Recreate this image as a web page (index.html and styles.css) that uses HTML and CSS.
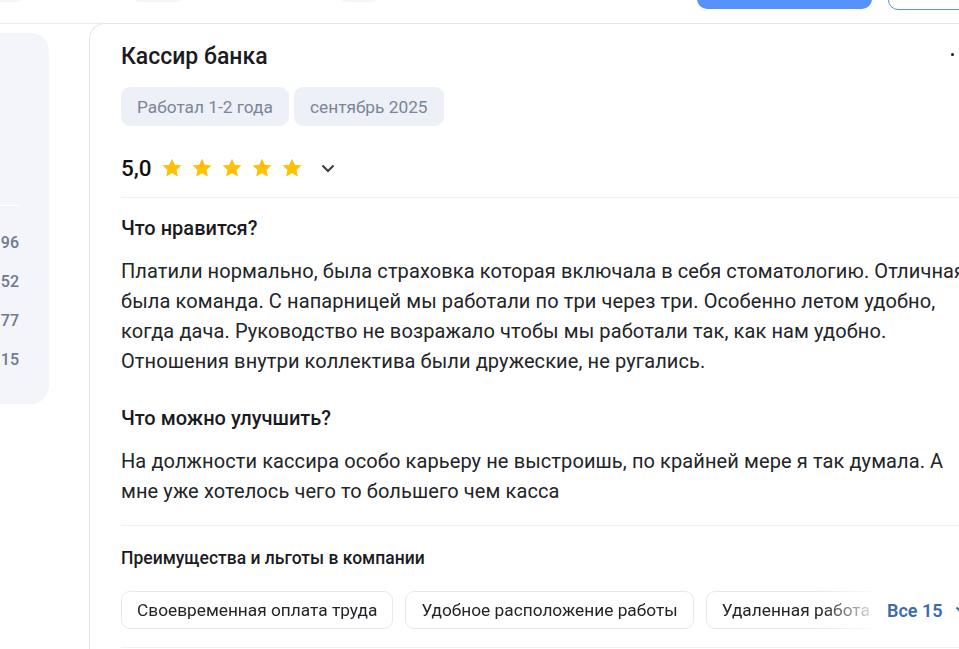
FILE: index.html
```html
<!DOCTYPE html>
<html lang="ru">
<head>
    <meta charset="UTF-8">
    <meta name="viewport" content="width=device-width, initial-scale=1.0">
    <title>Отзыв — Кассир банка</title>
    <link rel="stylesheet" href="styles.css">
</head>
<body>
    <!-- Top bar (scrolled, only bottoms visible) -->
    <header class="topbar">
        <span class="top-chip chip-a"></span>
        <span class="top-chip chip-b"></span>
        <span class="top-chip chip-c"></span>
        <span class="top-btn top-btn-primary"></span>
        <span class="top-btn top-btn-outline"></span>
    </header>

    <div class="page">
        <!-- Left stats panel -->
        <aside class="side-panel">
            <div class="side-line"></div>
            <ul class="side-stats">
                <li>96</li>
                <li>52</li>
                <li>77</li>
                <li>15</li>
            </ul>
        </aside>

        <!-- Review card -->
        <article class="review">
            <div class="review-head">
                <h2 class="review-title">Кассир банка</h2>
                <span class="more-dot"></span>
            </div>

            <div class="tags">
                <span class="tag">Работал 1-2 года</span>
                <span class="tag">сентябрь 2025</span>
            </div>

            <div class="rating">
                <span class="rating-value">5,0</span>
                <div class="stars">
                    <svg viewBox="0 0 24 24"><path d="M12 1.8l3.1 6.6 7.2.8-5.4 4.9 1.5 7.1L12 17.6l-6.4 3.6 1.5-7.1L1.7 9.2l7.2-.8z"/></svg>
                    <svg viewBox="0 0 24 24"><path d="M12 1.8l3.1 6.6 7.2.8-5.4 4.9 1.5 7.1L12 17.6l-6.4 3.6 1.5-7.1L1.7 9.2l7.2-.8z"/></svg>
                    <svg viewBox="0 0 24 24"><path d="M12 1.8l3.1 6.6 7.2.8-5.4 4.9 1.5 7.1L12 17.6l-6.4 3.6 1.5-7.1L1.7 9.2l7.2-.8z"/></svg>
                    <svg viewBox="0 0 24 24"><path d="M12 1.8l3.1 6.6 7.2.8-5.4 4.9 1.5 7.1L12 17.6l-6.4 3.6 1.5-7.1L1.7 9.2l7.2-.8z"/></svg>
                    <svg viewBox="0 0 24 24"><path d="M12 1.8l3.1 6.6 7.2.8-5.4 4.9 1.5 7.1L12 17.6l-6.4 3.6 1.5-7.1L1.7 9.2l7.2-.8z"/></svg>
                </div>
                <svg class="chevron" viewBox="0 0 14 9"><path d="M1.5 1.5L7 7l5.5-5.5"/></svg>
            </div>

            <section class="block">
                <h3 class="block-title">Что нравится?</h3>
                <p class="block-text">Платили нормально, была страховка которая включала в себя стоматологию. Отличная была команда. С напарницей мы работали по три через три. Особенно летом удобно, когда дача. Руководство не возражало чтобы мы работали так, как нам удобно. Отношения внутри коллектива были дружеские, не ругались.</p>
            </section>

            <section class="block block-second">
                <h3 class="block-title">Что можно улучшить?</h3>
                <p class="block-text">На должности кассира особо карьеру не выстроишь, по крайней мере я так думала. А мне уже хотелось чего то большего чем касса</p>
            </section>

            <section class="benefits">
                <h4 class="benefits-title">Преимущества и льготы в компании</h4>
                <div class="benefits-row">
                    <div class="benefit-list">
                        <span class="benefit">Своевременная оплата труда</span>
                        <span class="benefit">Удобное расположение работы</span>
                        <span class="benefit">Удаленная работа</span>
                    </div>
                    <a class="benefits-all" href="#">Все 15
                        <svg viewBox="0 0 12 8"><path d="M1.5 1.5L6 6l4.5-4.5"/></svg>
                    </a>
                </div>
            </section>
        </article>
    </div>
</body>
</html>
```

FILE: styles.css
```css
/* Global Styles */
body {
    margin: 0;
    font-family: Roboto, "Liberation Sans", Arial, sans-serif;
    background-color: #ffffff;
    color: #1f2329;
    width: 959px;
    height: 649px;
    overflow: hidden;
}

/* Top bar */
.topbar {
    height: 23px;
    border-bottom: 1px solid #ebecef;
    display: flex;
    align-items: flex-start;
    overflow: hidden;
}

.top-chip {
    display: block;
    flex-shrink: 0;
    height: 12px;
    margin-top: -10px;
    background-color: #f4f5fa;
    border-radius: 8px;
}

.chip-a {
    width: 40px;
    margin-left: -18px;
}

.chip-b {
    width: 50px;
    margin-left: 111px;
}

.chip-c {
    width: 38px;
    margin-left: 157px;
}

.top-btn {
    display: block;
    flex-shrink: 0;
    height: 30px;
    margin-top: -21px;
    border-radius: 10px;
    box-sizing: border-box;
}

.top-btn-primary {
    width: 175px;
    margin-left: 319px;
    background-color: #5592fc;
}

.top-btn-outline {
    width: 120px;
    margin-top: -20px;
    margin-left: 16px;
    border: 1px solid #5b8ff0;
    background-color: #ffffff;
}

/* Page layout */
.page {
    display: flex;
    align-items: flex-start;
}

/* Left panel */
.side-panel {
    width: 250px;
    margin-left: -201px;
    margin-top: 9px;
    height: 371px;
    flex-shrink: 0;
    box-sizing: border-box;
    padding: 172px 30px 0 0;
    background-color: #f4f5fa;
    border-radius: 18px;
}

.side-line {
    height: 1px;
    background-color: #ffffff;
}

.side-stats {
    list-style: none;
    margin: 26px 0 0;
    padding: 0;
    text-align: right;
}

.side-stats li {
    height: 39px;
    font-size: 16px;
    font-weight: 500;
    color: #6d7a8e;
    line-height: 22px;
}

/* Review card */
.review {
    flex: 1;
    margin-left: 40px;
    margin-top: -1px;
    height: 700px;
    border: 1px solid #e4e6ec;
    border-right: none;
    border-radius: 16px 0 0 0;
    padding: 18px 0 0 31px;
    box-sizing: border-box;
    min-width: 0;
}

.review-head {
    display: flex;
    justify-content: space-between;
    align-items: flex-start;
}

.review-title {
    margin: 0;
    font-size: 23px;
    font-weight: 500;
    line-height: 30px;
    color: #1b1b1f;
}

.more-dot {
    width: 3px;
    height: 3px;
    margin-top: 11px;
    margin-right: 5px;
    border-radius: 50%;
    background-color: #1b1b1f;
}

.tags {
    display: flex;
    gap: 5px;
    margin-top: 15px;
}

.tag {
    height: 39px;
    padding: 0 16px;
    display: flex;
    align-items: center;
    background-color: #edf0f7;
    border-radius: 9px;
    font-size: 17.3px;
    color: #7b8597;
}

.rating {
    display: flex;
    align-items: center;
    height: 40px;
    margin-top: 22px;
    padding-bottom: 9px;
    border-bottom: 1px solid #eef0f3;
}

.rating-value {
    font-size: 22.5px;
    font-weight: 500;
    color: #111111;
    margin-right: 9px;
}

.stars {
    display: flex;
    gap: 8px;
}

.stars svg {
    width: 22px;
    height: 22px;
    fill: #ffc107;
}

.chevron {
    width: 14px;
    height: 9px;
    margin-left: 18px;
    fill: none;
    stroke: #3a3d44;
    stroke-width: 2;
}

/* Review text blocks */
.block {
    margin-top: 18px;
}

.block-second {
    margin-top: 30px;
}

.block-title {
    margin: 0;
    font-size: 20px;
    font-weight: 500;
    line-height: 24px;
    color: #1b1b1f;
}

.block-text {
    margin: 16px 0 0;
    font-size: 20px;
    letter-spacing: 0.1px;
    line-height: 30px;
    color: #222428;
    width: 862px;
}

/* Benefits */
.benefits {
    margin-top: 19px;
    border-top: 1px solid #eef0f3;
    border-bottom: 1px solid #eef0f3;
    padding: 20px 0 18px;
}

.benefits-title {
    margin: 0;
    font-size: 17.5px;
    font-weight: 500;
    line-height: 24px;
    color: #1b1b1f;
}

.benefits-row {
    display: flex;
    align-items: center;
    margin-top: 21px;
    width: 860px;
}

.benefit-list {
    display: flex;
    gap: 12px;
    width: 760px;
    flex-shrink: 0;
    overflow: hidden;
    -webkit-mask-image: linear-gradient(to right, #000 700px, transparent 760px);
    mask-image: linear-gradient(to right, #000 700px, transparent 760px);
}

.benefit {
    flex-shrink: 0;
    height: 38px;
    padding: 0 15px;
    display: flex;
    align-items: center;
    border: 1px solid #e6e8ef;
    border-radius: 9px;
    box-sizing: border-box;
    font-size: 17.3px;
    color: #222428;
    white-space: nowrap;
}

.benefits-all {
    display: flex;
    align-items: center;
    gap: 12px;
    margin-left: 6px;
    font-size: 18px;
    font-weight: 600;
    color: #3d69b0;
    text-decoration: none;
    flex-shrink: 0;
}

.benefits-all svg {
    width: 12px;
    height: 8px;
    fill: none;
    stroke: #3d69b0;
    stroke-width: 2;
}
```
